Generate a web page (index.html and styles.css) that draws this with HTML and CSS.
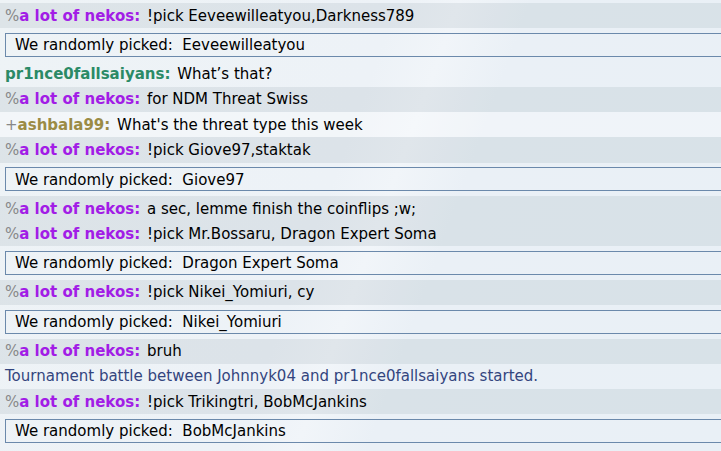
FILE: index.html
```html
<!DOCTYPE html>
<html lang="en">
<head>
    <meta charset="UTF-8">
    <meta name="viewport" content="width=device-width, initial-scale=1.0">
    <title>Chat log</title>
    <link rel="stylesheet" href="styles.css">
</head>
<body>
    <div class="chatlog">
        <div class="chat mine"><strong class="user nekos"><small>%</small>a lot of nekos:</strong> <em>!pick Eeveewilleatyou,Darkness789</em></div>
        <div class="infobox">We randomly picked:&nbsp; Eeveewilleatyou</div>
        <div class="chat"><strong class="user prince">pr1nce0fallsaiyans:</strong> <em>What’s that?</em></div>
        <div class="chat mine"><strong class="user nekos"><small>%</small>a lot of nekos:</strong> <em>for NDM Threat Swiss</em></div>
        <div class="chat light"><strong class="user ashbala"><small>+</small>ashbala99:</strong> <em>What's the threat type this week</em></div>
        <div class="chat mine"><strong class="user nekos"><small>%</small>a lot of nekos:</strong> <em>!pick Giove97,staktak</em></div>
        <div class="infobox">We randomly picked:&nbsp; Giove97</div>
        <div class="chat mine"><strong class="user nekos"><small>%</small>a lot of nekos:</strong> <em>a sec, lemme finish the coinflips ;w;</em></div>
        <div class="chat mine"><strong class="user nekos"><small>%</small>a lot of nekos:</strong> <em>!pick Mr.Bossaru, Dragon Expert Soma</em></div>
        <div class="infobox">We randomly picked:&nbsp; Dragon Expert Soma</div>
        <div class="chat mine"><strong class="user nekos"><small>%</small>a lot of nekos:</strong> <em>!pick Nikei_Yomiuri, cy</em></div>
        <div class="infobox">We randomly picked:&nbsp; Nikei_Yomiuri</div>
        <div class="chat mine"><strong class="user nekos"><small>%</small>a lot of nekos:</strong> <em>bruh</em></div>
        <div class="notice">Tournament battle between Johnnyk04 and pr1nce0fallsaiyans started.</div>
        <div class="chat mine"><strong class="user nekos"><small>%</small>a lot of nekos:</strong> <em>!pick Trikingtri, BobMcJankins</em></div>
        <div class="infobox">We randomly picked:&nbsp; BobMcJankins</div>
    </div>
</body>
</html>
```

FILE: styles.css
```css
html, body {
    margin: 0;
    padding: 0;
    overflow: hidden;
}
body {
    font-family: "DejaVu Sans", Verdana, sans-serif;
    font-size: 15px;
    color: #000;
    height: 451px;
    background: linear-gradient(110deg, #eef3f6 0%, #edf2f7 45%, #f1f5f9 52%, #eaf0f6 60%, #e9f0f6 100%);
}
.chatlog {
    padding-top: 3px;
}
.chat, .notice {
    padding: 3.5px 5px 2.5px;
    line-height: 19.2px;
    white-space: nowrap;
}
.chat.mine {
    background: rgba(0, 40, 60, 0.07);
}
.chat.light {
    background: rgba(255, 255, 255, 0.3);
}
.user {
    font-weight: bold;
    margin-right: 2px;
}
.user small {
    font-size: 15px;
    font-weight: normal;
    color: #888;
}
.nekos { color: #a21de6; }
.prince { color: #2b8a66; }
.ashbala { color: #9b8b45; }
.chat em {
    font-style: normal;
}
.notice {
    color: #33457e;
}
.infobox {
    border: 1px solid #6b89ab;
    border-right: none;
    margin: 4.5px 0 5px 5px;
    padding: 2.5px 9px 1.5px;
    line-height: 18px;
    white-space: nowrap;
}
```
